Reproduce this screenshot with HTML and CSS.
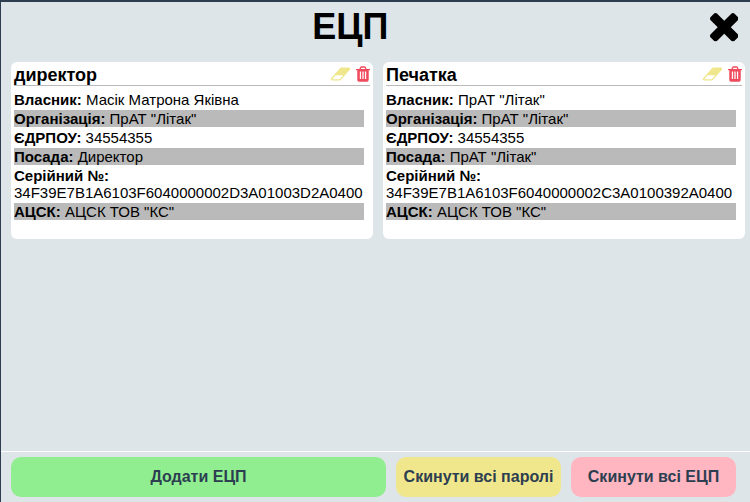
FILE: index.html
```html
<!DOCTYPE html>
<html lang="uk">
<head>
<meta charset="utf-8">
<title>ЕЦП</title>
<link rel="stylesheet" href="styles.css">
</head>
<body>
<svg class="defs" aria-hidden="true">
  <symbol id="times" viewBox="110 366 1188 1188"><path d="M1298 1322q0 40-28 68l-136 136q-28 28-68 28t-68-28l-294-294-294 294q-28 28-68 28t-68-28l-136-136q-28-28-28-68t28-68l294-294-294-294q-28-28-28-68t28-68l136-136q28-28 68-28t68 28l294 294 294-294q28-28 68-28t68 28l136 136q28 28 28 68t-28 68l-294 294 294 294q28 28 28 68z"/></symbol>
  <symbol id="eraser" viewBox="0 0 2048 1792"><path d="M960 1408l336-384h-768l-336 384h768zm1013-1077q15 34 9.500 71.500t-30.500 65.500l-896 1024q-38 44-96 44h-768q-38 0-69.500-20.500t-47.500-54.500q-15-34-9.500-71.500t30.500-65.500l896-1024q38-44 96-44h768q38 0 69.500 20.500t47.500 54.500z"/></symbol>
  <symbol id="trash" viewBox="192 0 1408 1792"><path d="M704 1376v-704q0-14-9-23t-23-9h-64q-14 0-23 9t-9 23v704q0 14 9 23t23 9h64q14 0 23-9t9-23zm256 0v-704q0-14-9-23t-23-9h-64q-14 0-23 9t-9 23v704q0 14 9 23t23 9h64q14 0 23-9t9-23zm256 0v-704q0-14-9-23t-23-9h-64q-14 0-23 9t-9 23v704q0 14 9 23t23 9h64q14 0 23-9t9-23zm-544-992h448l-48-117q-7-9-17-11h-317q-10 2-17 11zm928 32v64q0 14-9 23t-23 9h-96v948q0 83-47 143.500t-113 60.500h-832q-66 0-113-58.500t-47-141.500v-952h-96q-14 0-23-9t-9-23v-64q0-14 9-23t23-9h309l70-167q15-37 54-63t79-26h320q40 0 79 26t54 63l70 167h309q14 0 23 9t9 23z"/></symbol>
</svg>
<div class="window">
  <header class="top">
    <h1>ЕЦП</h1>
    <svg class="close"><use href="#times"/></svg>
  </header>
  <main class="cards">
    <section class="card">
      <div class="card-head"><h2>директор</h2><svg class="eraser"><use href="#eraser"/></svg><svg class="trash"><use href="#trash"/></svg></div>
      <ul>
        <li><b>Власник:</b> Масік Матрона Яківна</li>
        <li><b>Організація:</b> ПрАТ "Літак"</li>
        <li><b>ЄДРПОУ:</b> 34554355</li>
        <li><b>Посада:</b> Директор</li>
        <li><b>Серійний №:</b> 34F39E7B1A6103F6040000002D3A01003D2A0400</li>
        <li><b>АЦСК:</b> АЦСК ТОВ "КС"</li>
      </ul>
    </section>
    <section class="card">
      <div class="card-head"><h2>Печатка</h2><svg class="eraser"><use href="#eraser"/></svg><svg class="trash"><use href="#trash"/></svg></div>
      <ul>
        <li><b>Власник:</b> ПрАТ "Літак"</li>
        <li><b>Організація:</b> ПрАТ "Літак"</li>
        <li><b>ЄДРПОУ:</b> 34554355</li>
        <li><b>Посада:</b> ПрАТ "Літак"</li>
        <li><b>Серійний №:</b> 34F39E7B1A6103F6040000002C3A0100392A0400</li>
        <li><b>АЦСК:</b> АЦСК ТОВ "КС"</li>
      </ul>
    </section>
  </main>
  <footer class="actions">
    <button class="add">Додати ЕЦП</button>
    <button class="reset-pass">Скинути всі паролі</button>
    <button class="reset-all">Скинути всі ЕЦП</button>
  </footer>
</div>
</body>
</html>
```
FILE: styles.css
```css
* { box-sizing: border-box; }
body { margin: 0; font-family: "Liberation Sans", Arial, sans-serif; color: #000; }
.defs { display: none; }
.window {
  height: 502px;
  display: flex;
  flex-direction: column;
  background: #dee5e8;
  border-top: 2px solid #2c3e50;
  border-left: 1px solid #2c3e50;
  overflow: hidden;
}
.top {
  height: 60px;
  display: grid;
  grid-template-columns: 1fr 28.5px;
  padding: 3px 12px 0 0;
}
h1 { margin: 1px 0 0; padding-right: 10px; font-size: 36px; line-height: 42px; text-align: center; }
.close { width: 28.5px; height: 28.5px; margin-top: 8px; }
.cards { flex: 1; display: flex; align-items: flex-start; gap: 10px; padding-left: 10px; }
.card {
  width: 362px;
  height: 177px;
  flex: none;
  padding: 3px;
  background: #fff;
  border-radius: 6px;
}
.card-head {
  display: flex;
  height: 21px;
  border-bottom: 1px solid #bababa;
}
h2 { flex: 1; margin: 0; font-size: 18px; line-height: 20px; }
.eraser { width: 21px; height: 18px; fill: khaki; margin-right: 5px; }
.trash { width: 14px; height: 18px; fill: #f04a5d; }
ul { width: 350px; margin: 5px 0 0; padding: 0; list-style: none; font-size: 15px; line-height: 17px; }
li { margin-bottom: 2px; }
li:nth-child(even) { background: #bababa; }
.actions {
  height: 51px;
  display: flex;
  gap: 10px;
  padding: 5px 10px 0;
  border-top: 1px solid #fff;
}
button {
  width: 165px;
  height: 40px;
  padding: 0;
  border: 0;
  border-radius: 10px;
  font: bold 16px "Liberation Sans", Arial, sans-serif;
  color: #2c3e50;
}
.add { width: 375px; background: lightgreen; }
.reset-pass { background: khaki; }
.reset-all { background: lightpink; }
```
